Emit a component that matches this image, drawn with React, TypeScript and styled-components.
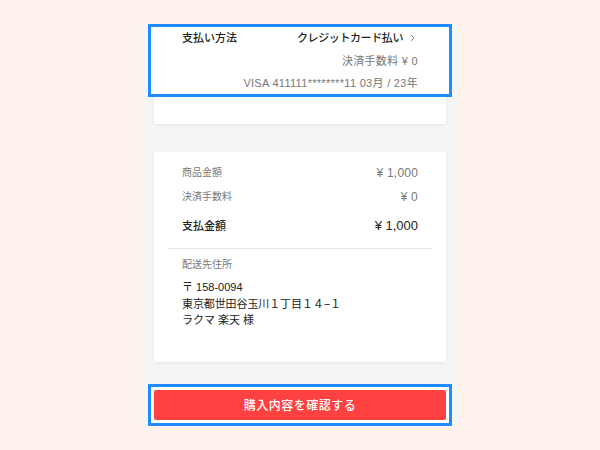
import React from "react";
import styled, { createGlobalStyle } from "styled-components";

const GlobalStyle = createGlobalStyle`
  html, body {
    margin: 0;
    padding: 0;
    background: #fef3ec;
  }
  body {
    font-family: "Liberation Sans", "Noto Sans CJK JP", sans-serif;
    color: #222;
    -webkit-font-smoothing: antialiased;
  }
`;

const Page = styled.div`
  width: 600px;
  height: 450px;
  display: flex;
  justify-content: center;
  padding-top: 24px;
  box-sizing: border-box;
  overflow: hidden;
`;

const Column = styled.main`
  width: 316px;
  height: 401px;
  background: #f5f5f5;
  padding: 0 12px 6px;
  box-sizing: border-box;
  display: flex;
  flex-direction: column;
`;

const Card = styled.section<{ $padTop: number; $padBottom: number }>`
  background: #fff;
  box-shadow: 0 1px 3px rgba(0, 0, 0, 0.07);
  padding: ${(p) => p.$padTop}px 0 ${(p) => p.$padBottom}px;
  margin-bottom: 28px;
`;

const Highlightable = styled.div`
  position: relative;
`;

const Highlight = styled.div`
  position: absolute;
  inset: -6px;
  border: 3px solid #1e8cff;
  box-shadow: inset 0 0 0 3px #fff;
  pointer-events: none;
`;

const PaymentBlock = styled.div`
  padding: 0 28px;
  display: flex;
  flex-direction: column;
  align-items: stretch;
`;

const Row = styled.div<{ $gap?: number }>`
  display: flex;
  justify-content: space-between;
  align-items: center;
  margin-top: ${(p) => p.$gap ?? 0}px;
`;

const Label = styled.span<{ $strong?: boolean }>`
  font-size: ${(p) => (p.$strong ? 11 : 10)}px;
  line-height: 16px;
  font-weight: ${(p) => (p.$strong ? 500 : 400)};
  color: ${(p) => (p.$strong ? "#222" : "#777")};
`;

const Value = styled.span`
  font-size: 12px;
  line-height: 16px;
  letter-spacing: 0.2px;
  color: #777;
`;

const MethodLink = styled.span`
  display: flex;
  align-items: center;
  gap: 7px;
  font-size: 11px;
  line-height: 16px;
  font-weight: 500;
  color: #222;
  letter-spacing: -0.4px;
`;

const Chevron = styled.svg`
  width: 5px;
  height: 8px;
  margin-right: 3px;
`;

const SubLine = styled.div<{ $gap: number }>`
  margin-top: ${(p) => p.$gap}px;
  text-align: right;
  font-size: 11px;
  line-height: 16px;
  letter-spacing: 0.3px;
  color: #777;
`;

const Summary = styled.div`
  padding: 0 28px;
  display: flex;
  flex-direction: column;
`;

const TotalRow = styled(Row)`
  min-height: 18px;
`;

const TotalLabel = styled.span`
  font-size: 11px;
  line-height: 18px;
  font-weight: 500;
  color: #222;
`;

const TotalValue = styled.span`
  font-size: 13px;
  line-height: 18px;
  font-weight: 500;
  color: #222;
`;

const Divider = styled.hr`
  border: none;
  height: 1px;
  background: #e3e3e3;
  margin: 13px 14px 0;
`;

const Address = styled.div`
  padding: 8px 28px 0;
`;

const AddressTitle = styled.div`
  font-size: 10px;
  line-height: 16px;
  color: #777;
`;

const AddressLines = styled.div`
  margin-top: 6px;
  font-size: 11px;
  line-height: 16.5px;
  color: #222;
`;

const Line = styled.div<{ $tight?: boolean }>`
  letter-spacing: ${(p) => (p.$tight ? "-0.1px" : "0")};
  white-space: nowrap;
`;

const BuyButton = styled.button`
  width: 100%;
  height: 30px;
  border: none;
  border-radius: 2px;
  background: #ff4141;
  color: #fff;
  font-family: inherit;
  font-size: 12px;
  font-weight: 500;
  letter-spacing: 0.5px;
  cursor: pointer;
  display: flex;
  align-items: center;
  justify-content: center;
`;

const ButtonWrap = styled(Highlightable)`
  margin-top: 0;
`;

export default function App() {
  return (
    <>
      <GlobalStyle />
      <Page>
        <Column>
          <Card $padTop={6} $padBottom={33}>
            <Highlightable>
              <PaymentBlock>
                <Row>
                  <Label $strong>支払い方法</Label>
                  <MethodLink>
                    クレジットカード払い
                    <Chevron viewBox="0 0 5 8">
                      <path d="M1 1l3 3-3 3" fill="none" stroke="#888" strokeWidth="1" />
                    </Chevron>
                  </MethodLink>
                </Row>
                <SubLine $gap={7}>決済手数料 ¥ 0</SubLine>
                <SubLine $gap={6}>VISA 411111********11 03月 / 23年</SubLine>
              </PaymentBlock>
              <Highlight />
            </Highlightable>
          </Card>

          <Card $padTop={13} $padBottom={33}>
            <Summary>
              <Row>
                <Label>商品金額</Label>
                <Value>¥ 1,000</Value>
              </Row>
              <Row $gap={8}>
                <Label>決済手数料</Label>
                <Value>¥ 0</Value>
              </Row>
              <TotalRow $gap={12}>
                <TotalLabel>支払金額</TotalLabel>
                <TotalValue>¥ 1,000</TotalValue>
              </TotalRow>
            </Summary>
            <Divider />
            <Address>
              <AddressTitle>配送先住所</AddressTitle>
              <AddressLines>
                <Line>〒 158-0094</Line>
                <Line $tight>東京都世田谷玉川１丁目１４−１</Line>
                <Line>ラクマ 楽天 様</Line>
              </AddressLines>
            </Address>
          </Card>

          <ButtonWrap>
            <BuyButton type="button">購入内容を確認する</BuyButton>
            <Highlight />
          </ButtonWrap>
        </Column>
      </Page>
    </>
  );
}
